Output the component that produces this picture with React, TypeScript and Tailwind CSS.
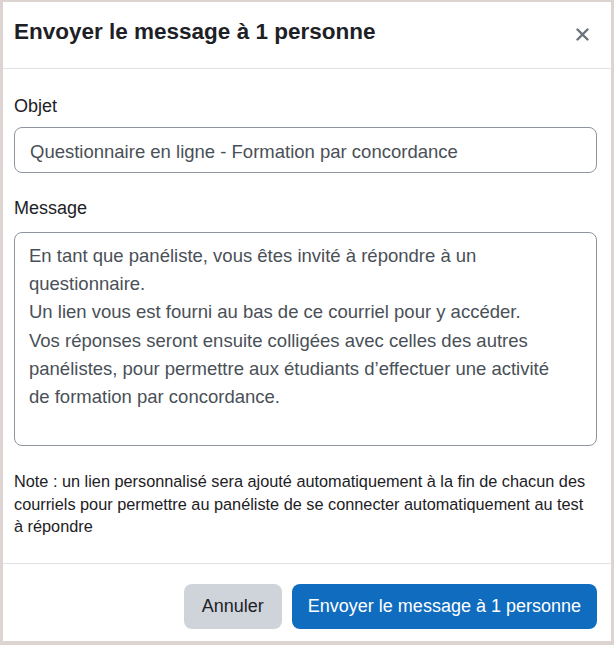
import React from "react"

const message = `En tant que panéliste, vous êtes invité à répondre à un
questionnaire.
Un lien vous est fourni au bas de ce courriel pour y accéder.
Vos réponses seront ensuite colligées avec celles des autres
panélistes, pour permettre aux étudiants d’effectuer une activité
de formation par concordance.`

export default function App() {
  return (
    <div className="w-[614px] h-[645px] bg-[#ddd3d0] pl-[3px] pr-[3px] pt-[2px] pb-[4px] font-['Liberation_Sans',sans-serif] text-[#1d2125]">
      <div className="h-full bg-white flex flex-col">
        {/* header */}
        <div className="h-[67px] flex items-center justify-between pl-[11px] pr-[22px] pb-[5px] border-b border-[#dee2e6]">
          <h5 className="text-[22.5px] font-bold leading-none">Envoyer le message à 1 personne</h5>
          <button className="text-[#6a737b] mt-[4px]" aria-label="Fermer">
            <svg width="13" height="13" viewBox="0 0 13 13" fill="none" stroke="currentColor" strokeWidth="2.4" strokeLinecap="round">
              <path d="M1.5 1.5l10 10M11.5 1.5l-10 10" />
            </svg>
          </button>
        </div>

        {/* body */}
        <div className="flex-1 flex flex-col pl-[11px] pr-[14px] pt-[25px] border-b border-[#dee2e6]">
          <label className="text-[18px] leading-[24px]">Objet</label>
          <input
            readOnly
            value="Questionnaire en ligne - Formation par concordance"
            className="mt-[9px] h-[46px] w-full rounded-[8px] border border-[#8f959e] px-[15px] pt-[3px] text-[18.5px] text-[#495057] outline-none"
          />
          <label className="mt-[23px] text-[18px] leading-[24px]">Message</label>
          <textarea
            readOnly
            value={message}
            className="mt-[12px] h-[214px] w-full resize-none overflow-hidden rounded-[8px] border border-[#8f959e] pl-[14px] pr-[10px] pt-[9px] text-[18.5px] leading-[28.2px] text-[#495057] outline-none"
          />
          <p className="mt-[24px] pr-[8px] text-[16.3px] leading-[22.5px]">
            Note : un lien personnalisé sera ajouté automatiquement à la fin de chacun des courriels pour permettre au panéliste de se connecter automatiquement au test à répondre
          </p>
        </div>

        {/* footer */}
        <div className="h-[77px] flex justify-end items-start gap-[10px] pt-[20px] pr-[14px]">
          <button className="h-[45px] px-[18px] rounded-[8px] bg-[#ced4da] text-[18px] text-[#1d2125]">Annuler</button>
          <button className="h-[45px] px-[16px] rounded-[8px] bg-[#0f6cbf] text-[18px] text-white">Envoyer le message à 1 personne</button>
        </div>
      </div>
    </div>
  )
}
